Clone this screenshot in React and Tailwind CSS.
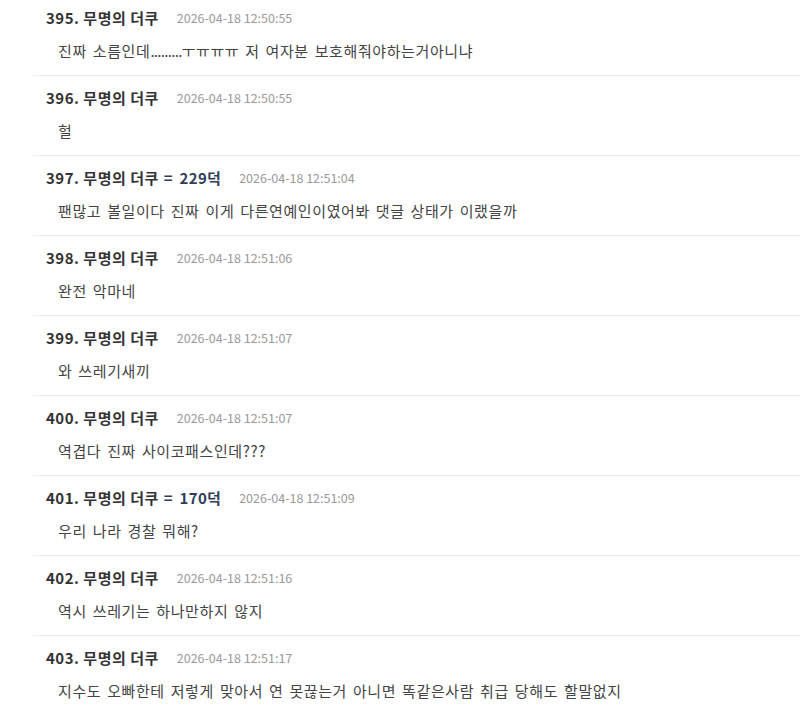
import React from "react";

const items = [
  { n: 395, score: null, date: "2026-04-18 12:50:55", text: <>진짜 소름인데<span className="tracking-[-0.7px]">.........</span>ㅜㅠㅠㅠ 저 여자분 보호해줘야하는거아니냐</> },
  { n: 396, score: null, date: "2026-04-18 12:50:55", text: "헐" },
  { n: 397, score: "229", date: "2026-04-18 12:51:04", text: "팬많고 볼일이다 진짜 이게 다른연예인이였어봐 댓글 상태가 이랬을까" },
  { n: 398, score: null, date: "2026-04-18 12:51:06", text: "완전 악마네" },
  { n: 399, score: null, date: "2026-04-18 12:51:07", text: "와 쓰레기새끼" },
  { n: 400, score: null, date: "2026-04-18 12:51:07", text: "역겹다 진짜 사이코패스인데???" },
  { n: 401, score: "170", date: "2026-04-18 12:51:09", text: "우리 나라 경찰 뭐해?" },
  { n: 402, score: null, date: "2026-04-18 12:51:16", text: "역시 쓰레기는 하나만하지 않지" },
  { n: 403, score: null, date: "2026-04-18 12:51:17", text: "지수도 오빠한테 저렇게 맞아서 연 못끊는거 아니면 똑같은사람 취급 당해도 할말없지" },
];

export default function App() {
  return (
    <div
      className="w-[800px] h-[709px] overflow-hidden bg-white"
      style={{ fontFamily: '"Noto Sans CJK KR", "Noto Sans", sans-serif' }}
    >
      <div className="ml-[33px] -mt-[4px]">
        {items.map((it) => (
          <div key={it.n} className="border-b border-[#ececec] pt-[12px] pb-[14px] pl-[13px]">
            <div className="flex items-center h-[20px] whitespace-nowrap">
              <span className="text-[15px] font-bold text-[#333] tracking-[0.5px]">
                {it.n}. 무명의 더쿠
              </span>
              {it.score && (
                <span className="ml-[5px] text-[15px] font-bold text-[#2f3e5c] tracking-[0.3px]">
                  = <span className="ml-[3px]">{it.score}덕</span>
                </span>
              )}
              <span className="ml-[18px] text-[12.5px] text-[#9a9a9a]">{it.date}</span>
            </div>
            <div className="mt-[13px] h-[20px] flex items-center pl-[12px] text-[15px] text-[#444] tracking-[0.6px] [word-spacing:2px] whitespace-nowrap">
              <span>{it.text}</span>
            </div>
          </div>
        ))}
      </div>
    </div>
  );
}
